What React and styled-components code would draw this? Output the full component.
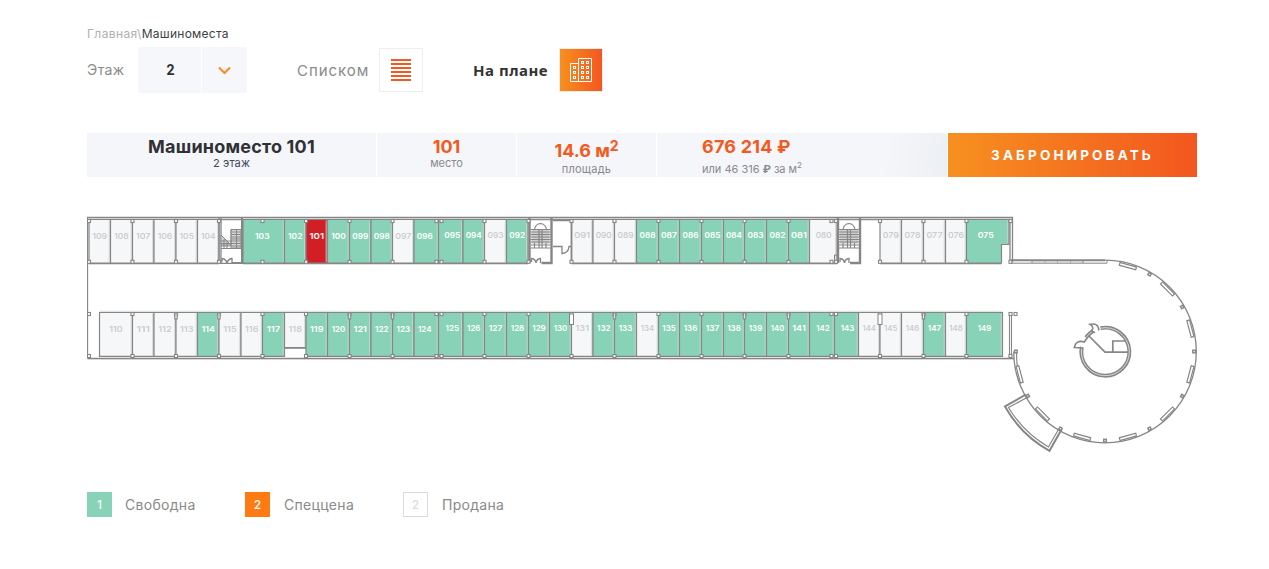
import React from "react";
import styled, { createGlobalStyle } from "styled-components";

const Global = createGlobalStyle`
  * { box-sizing: border-box; }
  body { margin: 0; background: #fff; font-family: Inter, "Noto Sans", sans-serif; color: #2f3135; overflow: hidden; }
`;
const Page = styled.main`
  width: 1110px;
  margin-left: 87px;
  padding-top: 26px;
`;
const Breadcrumbs = styled.nav`
  height: 21px;
  line-height: 16px;
  font-size: 12px;
  display: flex;
  white-space: pre;
`;
const Crumb = styled.span`
  color: ${(p) => (p.$current ? "#3c3f44" : "#b0b0b0")};
  letter-spacing: ${(p) => (p.$current ? "0.25px" : "0.4px")};
`;
const Toolbar = styled.div`
  height: 46px;
  display: flex;
`;
const FieldName = styled.span`
  width: 51px;
  line-height: 45px;
  font-size: 14px;
  letter-spacing: 0.4px;
  color: #8a8a8a;
`;
const Select = styled.div`
  width: 109px;
  display: grid;
  grid-template-columns: 63px 45px;
  gap: 1px;
  border-radius: 2px;
  overflow: hidden;
`;
const SelectPart = styled.div`
  background: #f6f7fb;
  display: flex;
  align-items: center;
  justify-content: center;
  padding-left: ${(p) => p.$nudge || 0}px;
  font: 700 14px Roboto, sans-serif;
`;
const View = styled.div`
  display: flex;
  align-items: center;
  margin-left: ${(p) => p.$gap}px;
`;
const ViewName = styled.span`
  width: ${(p) => p.$width}px;
  white-space: nowrap;
  font: ${(p) => (p.$active ? '700 15px "Noto Sans"' : "400 15px Inter")}, sans-serif;
  color: ${(p) => (p.$active ? "#333" : "#8a8a8a")};
  letter-spacing: ${(p) => p.$track || 0}px;
`;
const ViewButton = styled.button`
  width: 44px;
  height: 44px;
  padding: 0;
  border: 1px solid #eee;
  background: ${(p) => (p.$active ? "linear-gradient(90deg, #f79020, #f2571f) padding-box" : "#fff")};
  display: flex;
  align-items: center;
  justify-content: center;
`;
const Summary = styled.section`
  margin-top: 40px;
  height: 44px;
  display: grid;
  grid-template-columns: 289px 139px 139px 290px 249px;
  column-gap: 1px;
`;
const Fact = styled.div`
  background: ${(p) => (p.$shade ? "linear-gradient(100deg, #f5f6fa 78%, #eceff3 100%)" : "#f5f6fa")};
  padding: 4px 0 0 ${(p) => p.$indent || 0}px;
  text-align: ${(p) => (p.$indent ? "left" : "center")};
  white-space: nowrap;
`;
const Value = styled.div`
  font-size: ${(p) => p.$size || 18}px;
  font-weight: 700;
  height: ${(p) => p.$h || 19}px;
  line-height: ${(p) => p.$lh || 20}px;
  color: ${(p) => (p.$dark ? "#2f3135" : "#f25a20")};
  letter-spacing: ${(p) => p.$track || 0}px;
  sup { font-size: 14px; line-height: 0; vertical-align: 6px; }
`;
const Caption = styled.div`
  font-size: 11px;
  line-height: 14px;
  color: ${(p) => (p.$dark ? "#3b4a5a" : "#8a8a8a")};
  letter-spacing: ${(p) => p.$track || 0}px;
  sup { font-size: 8px; line-height: 0; vertical-align: 5px; }
`;
const Book = styled.button`
  border: 0;
  padding: 0;
  background: linear-gradient(90deg, #f79020, #f2571f);
  color: #fff;
  font: 700 13.5px Inter, sans-serif;
  letter-spacing: 3.15px;
`;
const Plan = styled.svg`
  display: block;
  margin-top: 39px;
  width: 1111px;
  height: 237px;
  font-family: Inter, sans-serif;
`;
const Legend = styled.footer`
  margin-top: 39px;
  display: flex;
`;
const LegendItem = styled.div`
  width: 158px;
  display: flex;
  align-items: center;
  font-size: 14px;
  color: #8a8a8a;
  letter-spacing: 0.3px;
`;
const Swatch = styled.span`
  width: 25px;
  height: 25px;
  margin-right: ${(p) => p.$gap || 14}px;
  border: 1px solid ${(p) => p.$line || p.$fill};
  background: ${(p) => p.$fill};
  color: ${(p) => (p.$line ? "#dcdcdc" : "#fff")};
  font-size: 12px;
  font-weight: 500;
  line-height: 23px;
  letter-spacing: 0;
  text-align: center;
`;

const INK = "#868686";
const GREEN = "#88d3b7";
const RED = "#d21f26";
const PALE = "#f6f7f9";

// Each run: x of the first edge, then [number, right edge, state].
const topRuns = [
  [89, ["109", 110.5], ["108", 132.5], ["107", 154], ["106", 176], ["105", 197.5], ["104", 219]],
  [243, ["103", 284.5, "free"], ["102", 306, "free"], ["101", 327.5, "picked"], ["100", 349.5, "free"], ["099", 371, "free"], ["098", 392.5, "free"], ["097", 414], ["096", 438.5, "free"], ["095", 463, "free"], ["094", 484.5, "free"], ["093", 506.5], ["092", 528, "free"]],
  [571.5, ["091", 593], ["090", 614.5], ["089", 636.5], ["088", 658.5, "free"], ["087", 679.5, "free"], ["086", 701.5, "free"], ["085", 723.5, "free"], ["084", 744.5, "free"], ["083", 766.5, "free"], ["082", 788.5, "free"], ["081", 809.5, "free"], ["080", 837]],
  [880, ["079", 901.5], ["078", 923.5], ["077", 945.5], ["076", 966.5], ["075", 1009, "free"]],
];
const lowEdges = [99.5, 132.5, 154, 176, 197.5, 219, 241, 262.5, 284.5, 306, 327.5, 349.5, 371, 392.5, 414, 438.5, 463, 484.5, 506.5, 528.5, 549.5, 571.5, 593, 614.5, 636.5, 658.5, 679.5, 701.5, 723.5, 744.5, 766.5, 788.5, 809.5, 834.5, 858.5, 880, 901.5, 923.5, 945.5, 966.5, 1002.5];
const soldLow = [110, 111, 112, 113, 115, 116, 118, 131, 134, 144, 145, 146, 148];
const labelShift = { "096": -1.5, "095": 1.5, 124: -1.5, 125: 1.5, "080": 0.5, "075": -2, 142: 1, 143: 1, 103: -1.5 };

const Spot = ({ n, x1, x2, y1, y2, state, label }) => {
  const free = state === "free";
  const fill = free ? GREEN : state === "picked" ? RED : PALE;
  const shape = n === "075" ? `M${x1} ${y1}H${x2}V244.5H1001.5V${y2}H${x1}Z` : `M${x1} ${y1}H${x2}V${y2}H${x1}Z`;
  const width = n[0] === "0" ? 16 : n[1] === "0" ? 14.5 : 13.5;
  return (
    <g>
      <path d={shape} fill={fill} stroke={INK} strokeWidth="1.2" />
      <path d={`M${x2 - 1.3} ${y1 + 1}V${n === "075" ? 243 : y2 - 1}`} stroke="#d0d5d5" strokeWidth=".9" />
      <text x={(x1 + x2) / 2 + (labelShift[n] || 0)} y={label} textAnchor="middle" fontSize="8.2" fontWeight={state ? 600 : 500} textLength={width} lengthAdjust="spacingAndGlyphs" fill={state ? "#fff" : "#c8c8c9"}>{n}</text>
    </g>
  );
};

const Post = ({ x, y }) => <rect x={x - 1.5} y={y - 1.5} width="3" height="3" fill="#fff" stroke={INK} strokeWidth="1.1" />;

const Stairs = ({ x }) => (
  <g fill="none" stroke={INK} strokeWidth="1">
    <path d={`M${x} 218V263M${x + 22} 218V263H${x + 12}`} strokeWidth="2.4" />
    <rect x={x + 2} y="229.5" width="18" height="14" fill="#cfcfcf" stroke="none" />
    <path d={[229.5, 232, 234.5, 237, 239.5, 242, 245, 248].map((y) => `M${x + 1} ${y}H${x + 21}`).join("")} strokeWidth="1" />
    <path d={`M${x + 5} 243V248M${x + 16.500} 243V248M${x + 9.500} 230V248M${x + 12.500} 230V248M${x + 5} 229.500Q${x + 6} 224 ${x + 11} 223.500Q${x + 16} 224 ${x + 17} 229.500`} strokeWidth="1.2" />
    <path d={`M${x + 2} 262V258.500Q${x + 6} 259 ${x + 6.500} 263Q${x + 7} 259 ${x + 11} 258.500V263`} strokeWidth="1.3" />
  </g>
);

const range = (a, b, s) => Array.from({ length: Math.floor((b - a) / s) + 1 }, (_, i) => a + i * s);
const posts = [132.5, 176, 219, 262.5, 306, 349.5, 392.5, 436.5, 441.5, 484.5, 528.5, 571.5, 614.5, 658.5, 701.5, 744.5, 788.5, 831.5, 836, 880, 923.5, 966.5, 1010.5];

function FloorPlan() {
  return (
    <Plan viewBox="87 216 1111 237">
      <g fill="none" stroke={INK}>
        <path d="M87.5 358.5V217.5H1012.5V262" strokeWidth="1.3" />
        <path d="M87.5 358.5H1014M89 219.5H1010V263M89 263.3H242M243 263.3H528M571.5 263.3H837M880 263.3H1001.5" strokeWidth="1.3" />
        <path d="M88 218.6H1012M88 359.5H1014M89 264.500H219M243 264.500H528M571.500 264.500H837M880 264.500H1001.500" stroke="#d4d4d4" strokeWidth=".8" />
        <path d="M99.500 311.300H1002.500" stroke="#d4d4d4" strokeWidth=".8" />
        <path d="M1009.5 314V357M1011.5 314V357" strokeWidth="1.1" />
      </g>
      {topRuns.map(([start, ...cells]) => cells.map(([n, x2, state], i) => (
        <Spot key={n} n={n} x1={i ? cells[i - 1][1] : start} x2={x2} y1={219.5} y2={263} state={state} label={start < 243 || (start === 243 && x2 < 440) ? 239 : 238} />
      )))}
      {lowEdges.slice(0, -1).map((x, i) => {
        const n = 110 + i;
        return <Spot key={n} n={String(n)} x1={x} x2={lowEdges[i + 1]} y1={312.5} y2={n === 118 ? 347.5 : 356.3} state={soldLow.includes(n) ? undefined : "free"} label={n < 125 ? 332 : 331} />;
      })}
      <path d="M284.500 348H306" stroke={INK} strokeWidth="1.6" />

      <g fill="none" stroke={INK}>
        <path d="M219 218V263M221 218V263" strokeWidth="1.3" />
        <path d="M242 218V263H232" strokeWidth="2" />
        <path d="M231 229.500H241V248H231ZM221 235L231 245H221Z" fill="#d8d8d8" strokeWidth=".9" />
        <path d="M221 235L231 245V229.5H242M221 241H241M221 243.5H241M221 246H241M221 248.5H241M224 239V248M227 242V248M232 232H241M232 234.5H241M232 237H241M232 239H241M236.5 230V248" strokeWidth="1" />
        <path d="M222 262V258.5Q226 259 227 263Q228 259 232 258.5V263" strokeWidth="1.3" />
        <path d="M553 220.5H571M571.5 220V262" strokeWidth="1.7" />
        <path d="M553 246.5H562V253.5Q568.5 253 569 246.5H571.5" strokeWidth="1.3" />
        <path d="M834.5 263V255H837" />
      </g>
      <Stairs x={529.5} />
      <Stairs x={838} />
      {[89, ...posts].map((x) => [221, 261.8, 314, 356].map((y) => (
        <Post key={`${x}-${y}`} x={x} y={y} />
      )))}
      <Post x={1015.5} y={314} />
      <g fill="#fff" stroke={INK}>
        {[176, 219, 349.5, 392.5, 614.5, 744.5, 788.5, 923.5].map((x) => <rect key={x} x={x - 1.2} y="313" width="2.4" height="6" fill="#ddd" />)}
        <rect x="569.5" y="314" width="4" height="10.5" />
        <rect x="878" y="314" width="4" height="10.5" />
      </g>

      <g fill="none" stroke={INK}>
        <path d="M1011 260.3H1105" strokeWidth="2" />
        <path d="M1011 263.2H1107M1032 261V263M1045 261V263M1057.500 261V263M1070.500 261V263M1083 261V263M1107 261V263" />
        <path d="M1033 262H1082" stroke="#c4c4c4" />
        <path d="M1105 260.200A91.300 91.300 0 1 1 1013.700 351.500" strokeWidth="1.3" />
        <path d="M1016.500 353A89 89 0 0 0 1021 382" strokeWidth="1.2" />
      </g>
      <g transform="translate(1105 351.5)" fill="#fff" stroke={INK}>
        {range(-75, 165, 30).map((a) => <rect key={a} transform={`rotate(${a})`} x="87" y="-8.500" width="2.8" height="17" strokeWidth="1.2" />)}
        {range(-60, 180, 30).map((a) => <rect key={a} transform={`rotate(${a})`} x="87.800" y="-1.300" width="2.600" height="2.600" strokeWidth="1.4" />)}
      </g>
      <g fill="none" stroke={INK}>
        <path d="M1026 394.500L1005 406.500A114 114 0 0 0 1049.500 450.800L1061.500 429.500" strokeWidth="2" />
        <path d="M1028 397L1008.500 407.500A111 111 0 0 0 1048.500 447L1059 428.500" strokeWidth="1.2" />
        <path d="M1100.500 328.200A24 24 0 1 1 1081.800 347M1086 337.500A24 24 0 0 1 1093 331" strokeWidth="3.900" />
        <path d="M1100.500 328.200A24 24 0 1 1 1081.800 347M1086 337.500A24 24 0 0 1 1093 331" stroke="#d8d8d8" strokeWidth="1" />
        <path d="M1098.800 330.500Q1098.500 322.500 1090 324.300Q1094.500 327 1091.700 331L1095 332.800M1087 338L1084.300 342Q1076 339.500 1074.300 347.500L1083 348" strokeWidth="1.6" />
        <path d="M1088.500 335.500L1105 352.200H1128M1125 341H1112.800V352" strokeWidth="1.7" />
      </g>
    </Plan>
  );
}

const BuildingIcon = () => (
  <svg width="22" height="24" viewBox="0 0 22 24" fill="none" stroke="#fff">
    <path d="M8.500 23.500H.5V5.500H8.500M8.500 .5H21.500V23.500H8.500Z" />
    {[[4, 9], [4, 14], [4, 19], [12, 4], [17, 4], [12, 9], [17, 9], [12, 14], [17, 14], [12, 19], [17, 19]].map(([x, y]) => (
      <rect key={`${x}-${y}`} x={x - 0.500} y={y - 0.500} width="2" height="2" />
    ))}
  </svg>
);

export default function App() {
  return (
    <Page>
      <Global />
      <Breadcrumbs>
        <Crumb>Главная\</Crumb>
        <Crumb $current>Машиноместа</Crumb>
      </Breadcrumbs>
      <Toolbar>
        <FieldName>Этаж</FieldName>
        <Select>
          <SelectPart $nudge={2}>2</SelectPart>
          <SelectPart>
            <svg width="14" height="9" viewBox="0 0 14 9" fill="none" stroke="#f68b1f" strokeWidth="2"><path d="M1 1.500L6.500 7L12 1.500" /></svg>
          </SelectPart>
        </Select>
        <View $gap={50}>
          <ViewName $width={82} $track={0.95}>Списком</ViewName>
          <ViewButton>
            <svg width="20" height="22" viewBox="0 0 20 22" fill="#f15a22">
              {range(0, 20, 4).map((y) => <rect key={y} y={y} width="20" height="2" />)}
            </svg>
          </ViewButton>
        </View>
        <View $gap={50}>
          <ViewName $active $width={86} $track={0.5}>На плане</ViewName>
          <ViewButton $active><BuildingIcon /></ViewButton>
        </View>
      </Toolbar>
      <Summary>
        <Fact>
          <Value $dark $track={0.2}>Машиноместо 101</Value>
          <Caption $dark $track={0.1}>2 этаж</Caption>
        </Fact>
        <Fact>
          <Value>101</Value>
          <Caption>место</Caption>
        </Fact>
        <Fact>
          <Value $h={25} $lh={28}>14.6 м<sup>2</sup></Value>
          <Caption $track={0.2}>площадь</Caption>
        </Fact>
        <Fact $shade $indent={45}>
          <Value $h={25} $track={0.2}>676 214 ₽</Value>
          <Caption>или 46 316 <b>₽</b> за м<sup>2</sup></Caption>
        </Fact>
        <Book>ЗАБРОНИРОВАТЬ</Book>
      </Summary>
      <FloorPlan />
      <Legend>
        <LegendItem><Swatch $fill={GREEN} $gap={13}>1</Swatch>Свободна</LegendItem>
        <LegendItem><Swatch $fill="#ff7a12">2</Swatch>Спеццена</LegendItem>
        <LegendItem><Swatch $fill="#fff" $line="#dcdcdc">2</Swatch>Продана</LegendItem>
      </Legend>
    </Page>
  );
}
